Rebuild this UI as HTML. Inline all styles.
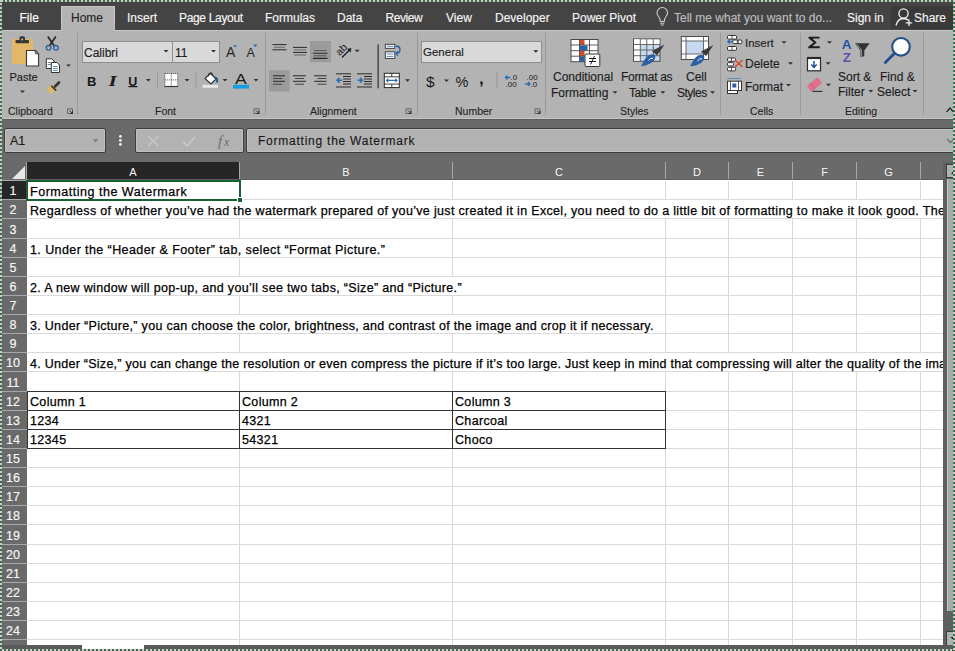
<!DOCTYPE html>
<html><head><meta charset="utf-8">
<style>
*{margin:0;padding:0;box-sizing:border-box}
html,body{width:955px;height:651px;overflow:hidden;background:#fff}
body{position:relative;font-family:"Liberation Sans",sans-serif;}
.a{position:absolute}
.t{position:absolute;white-space:pre;line-height:1}
.tab{color:#f4f4f4;font-size:12px;top:12px;-webkit-text-stroke-width:0.15px}
.grp{position:absolute;white-space:pre;line-height:1;color:#222;font-size:10.5px;top:105.8px;-webkit-text-stroke-width:0.1px}
.sep{position:absolute;top:33px;width:1px;height:82px;background:#9a9a9a}
.lbl{position:absolute;white-space:pre;line-height:1;color:#1e1e1e;font-size:12px;-webkit-text-stroke-width:0.15px}
.arr{position:absolute;width:0;height:0;border-left:3px solid transparent;border-right:3px solid transparent;border-top:3px solid #333}
.hl{left:27px;width:916px;height:1px;background:#d9d9d9}
.vl{top:181px;width:1px;height:465px;background:#d9d9d9}
.ch{position:absolute;top:162px;height:18px;color:#f8f8f8;font-size:11px;text-align:center;line-height:20px}
.rh{position:absolute;left:1px;width:24px;color:#f8f8f8;font-size:12.5px;text-align:center;line-height:11px;-webkit-text-stroke-width:0.15px}
.cell{position:absolute;color:#000;font-size:12.5px;white-space:pre;letter-spacing:0.33px;line-height:12px;-webkit-text-stroke-width:0.25px}
</style></head><body>

<!-- tab bar -->
<div class="a" style="left:0;top:0;width:955px;height:30px;background:#444"></div>
<div class="t tab" style="left:19.5px;color:#fff">File</div>
<div class="t tab" style="left:127px">Insert</div>
<div class="t tab" style="left:179px;letter-spacing:-0.33px">Page Layout</div>
<div class="t tab" style="left:265px">Formulas</div>
<div class="t tab" style="left:337px">Data</div>
<div class="t tab" style="left:385.5px;letter-spacing:-0.45px">Review</div>
<div class="t tab" style="left:446px">View</div>
<div class="t tab" style="left:495px">Developer</div>
<div class="t tab" style="left:572px">Power Pivot</div>
<div class="t tab" style="left:674px;color:#bdbdbd">Tell me what you want to do...</div>
<div class="t tab" style="left:847px">Sign in</div>
<div class="a" style="left:891px;top:6px;width:62px;height:23px;background:#3a3a3a"></div>
<div class="t tab" style="left:914px">Share</div>
<svg class="a" style="left:640px;top:0" width="315" height="30" viewBox="640 0 315 30">
<path d="M660.3 21.5 Q660.3 18.5 658.6 16.5 Q657 14.7 657 12.8 A5.3 5.3 0 0 1 667.6 12.8 Q667.6 14.7 666 16.5 Q664.3 18.5 664.3 21.5 Z" fill="none" stroke="#d0d0d0" stroke-width="1.1"/>
<path d="M660.3 23.3 H664.3 M660.8 25 H663.8" stroke="#d0d0d0" stroke-width="1.1"/>
<circle cx="903.5" cy="13.5" r="4.6" fill="none" stroke="#f0f0f0" stroke-width="1.3"/>
<path d="M896 25.5 Q897.5 18.8 903.5 18.5 Q906.5 18.5 908.5 20.3" fill="none" stroke="#f0f0f0" stroke-width="1.3"/>
<path d="M909 19.5 V26 M905.8 22.8 H912.2" stroke="#f0f0f0" stroke-width="1.3"/>
</svg>

<!-- ribbon body -->
<div class="a" style="left:0;top:30px;width:955px;height:89px;background:#b3b3b3;border-top:1px solid #c6c6c6"></div>
<div class="a" style="left:61px;top:6px;width:54px;height:25px;background:#b3b3b3;border:1px solid #c6c6c6;border-bottom:none"></div>
<div class="t tab" style="left:71px;color:#262626">Home</div>

<!-- separators -->
<div class="sep" style="left:77px"></div>
<div class="sep" style="left:265px"></div>
<div class="sep" style="left:417px"></div>
<div class="sep" style="left:545px"></div>
<div class="sep" style="left:720px"></div>
<div class="sep" style="left:800px"></div>
<div class="sep" style="left:923px"></div>
<!-- group labels -->
<div class="grp" style="left:8px">Clipboard</div>
<div class="grp" style="left:155px">Font</div>
<div class="grp" style="left:310px">Alignment</div>
<div class="grp" style="left:455px">Number</div>
<div class="grp" style="left:620px">Styles</div>
<div class="grp" style="left:750px">Cells</div>
<div class="grp" style="left:845px">Editing</div>
<!-- Clipboard -->
<div class="lbl" style="left:9.5px;top:71.5px;font-size:11px">Paste</div>
<!-- Font combos -->
<div class="a" style="left:82px;top:41px;width:91px;height:22px;background:#d9d9d9;border:1px solid #8e8e8e"></div>
<div class="a" style="left:172px;top:41px;width:48px;height:22px;background:#d9d9d9;border:1px solid #8e8e8e"></div>
<div class="lbl" style="left:84px;top:46.5px">Calibri</div>
<div class="lbl" style="left:175px;top:46.5px">11</div>
<!-- Number combo -->
<div class="a" style="left:421px;top:41px;width:121px;height:22px;background:#d9d9d9;border:1px solid #8e8e8e"></div>
<div class="lbl" style="left:423px;top:47px;font-size:11.5px">General</div>
<!-- Styles labels -->
<div class="lbl" style="left:553px;top:71px">Conditional</div>
<div class="lbl" style="left:551px;top:86.5px">Formatting</div>
<div class="lbl" style="left:621px;top:71px;letter-spacing:-0.3px">Format as</div>
<div class="lbl" style="left:629px;top:86.5px;letter-spacing:-0.4px">Table</div>
<div class="lbl" style="left:686px;top:71px">Cell</div>
<div class="lbl" style="left:677px;top:86.5px;letter-spacing:-0.5px">Styles</div>
<!-- Cells labels -->
<div class="lbl" style="left:745px;top:37.6px;font-size:11.5px">Insert</div>
<div class="lbl" style="left:745px;top:58.3px">Delete</div>
<div class="lbl" style="left:745px;top:80.6px">Format</div>
<!-- Editing labels -->
<div class="lbl" style="left:838px;top:70.8px">Sort &amp;</div>
<div class="lbl" style="left:838px;top:86px">Filter</div>
<div class="lbl" style="left:880px;top:70.8px">Find &amp;</div>
<div class="lbl" style="left:877px;top:86px">Select</div>
<!-- formula bar area -->
<div class="a" style="left:0;top:118px;width:955px;height:44px;background:#6a6a6a;border-top:1px solid #c6c6c6"></div><div class="a" style="left:0;top:119px;width:955px;height:1px;background:#5c5c5c"></div>
<div class="a" style="left:4px;top:128px;width:102px;height:25px;background:#b2b2b2;border:1px solid #3e3e3e;border-radius:2px;box-shadow:inset 0 0 0 1px #c0c0c0"></div>
<div class="lbl" style="left:10px;top:135px;font-size:12.5px;color:#1a1a1a">A1</div>
<div class="a" style="left:135px;top:128px;width:109px;height:25px;background:#b2b2b2;border:1px solid #3e3e3e;border-radius:2px;box-shadow:inset 0 0 0 1px #c0c0c0"></div>
<div class="a" style="left:246px;top:128px;width:720px;height:25px;background:#b2b2b2;border:1px solid #3e3e3e;border-radius:2px;box-shadow:inset 0 0 0 1px #c0c0c0"></div>
<div class="lbl" style="left:258px;top:135px;font-size:12px;letter-spacing:0.76px;color:#1a1a1a">Formatting the Watermark</div>

<svg class="a" style="left:0;top:119px" width="955" height="43" viewBox="0 119 955 43">
<path d="M92.8 139.2 H98.5 L95.65 142.2 Z" fill="#7a7a7a"/>
<circle cx="120.4" cy="136.4" r="1.3" fill="#fff"/>
<circle cx="120.4" cy="140.4" r="1.3" fill="#fff"/>
<circle cx="120.4" cy="144.4" r="1.3" fill="#fff"/>
<path d="M148 136 L158.5 146 M158.5 136 L148 146" stroke="#c8c8c8" stroke-width="1.3"/>
<path d="M183 141.5 L187.3 146 L195.3 136.5" stroke="#c8c8c8" stroke-width="1.6" fill="none"/>
<text x="218" y="145.5" font-family="Liberation Serif" font-style="italic" font-size="15" fill="#6e6e6e">f</text>
<text x="224" y="145.5" font-family="Liberation Serif" font-style="italic" font-size="12" fill="#6e6e6e">x</text>
<path d="M947 139 L950.5 142.5 L954 139" stroke="#707070" stroke-width="1.4" fill="none"/>
</svg>

<svg class="a" style="left:0;top:0" width="955" height="160" viewBox="0 0 955 160">
<!-- ===== Clipboard ===== -->
<!-- paste -->
<rect x="12" y="39" width="21" height="25" fill="#e3b768"/>
<rect x="15.5" y="40" width="13.5" height="3.2" rx="0.8" fill="#363636"/>
<rect x="19.5" y="36.3" width="5.5" height="4.5" rx="1.5" fill="#363636"/>
<circle cx="22.2" cy="39.4" r="1" fill="#c8c8c8"/>
<path d="M26.5 50.5 H35.3 L38.6 53.8 V66 H26.5 Z" fill="#fff" stroke="#363636" stroke-width="1.1" stroke-linejoin="round"/>
<path d="M35.3 50.5 V53.8 H38.6" fill="none" stroke="#363636" stroke-width="0.9"/>
<path d="M20 90.5 H25 L22.5 93 Z" fill="#333"/>
<!-- scissors -->
<path d="M47.8 36.5 L54.3 46 M55.8 36.5 L49.3 46" stroke="#262626" stroke-width="1.7" fill="none"/>
<circle cx="48.6" cy="47.8" r="2.3" fill="none" stroke="#2f62a5" stroke-width="1.4"/>
<circle cx="55.9" cy="47.8" r="2.3" fill="none" stroke="#2f62a5" stroke-width="1.4"/>
<!-- copy -->
<path d="M46.3 58.8 H51.8 L54 61 V68.5 H46.3 Z" fill="#fff" stroke="#333" stroke-width="1"/>
<path d="M47.8 62.5 H51.5 M47.8 64.5 H51.5" stroke="#3b6fae" stroke-width="0.8"/>
<path d="M51.3 62.5 H57 L59.5 65 V72.5 H51.3 Z" fill="#fff" stroke="#333" stroke-width="1"/>
<path d="M53 66.5 H57.8 M53 68.5 H57.8 M53 70.5 H57.8" stroke="#3b6fae" stroke-width="0.8"/>
<path d="M66 64.4 H71 L68.5 66.8 Z" fill="#333"/>
<!-- format painter -->
<path d="M52.5 84.5 L57.5 89.5 L51 93.7 L46.3 89 Z" fill="#e3b768"/>
<path d="M51.3 85.8 L56.2 90.6" stroke="#333" stroke-width="1.6"/>
<path d="M55 86.5 L59 82.5" stroke="#333" stroke-width="2.6" stroke-linecap="round"/>
<!-- launcher -->
<path d="M67.5 108.8 H72.5 V113.5 H67.5 Z" fill="none" stroke="#555" stroke-width="0.8"/>
<path d="M69.5 110.5 L72.5 113.5 M72.5 111 V113.5 H70" stroke="#333" stroke-width="1" fill="none"/>

<!-- ===== Font ===== -->
<path d="M163.5 50 H168.5 L166 52.5 Z" fill="#333"/>
<path d="M211 50 H216 L213.5 52.5 Z" fill="#333"/>
<text x="226" y="57" font-family="Liberation Sans" font-size="14" fill="#262626">A</text>
<path d="M233 46.8 L235 44.5 L237 46.8" fill="#2b6cb5"/>
<text x="246.5" y="57" font-family="Liberation Sans" font-size="12.5" fill="#262626">A</text>
<path d="M253 44.6 H257.5 L255.2 47 Z" fill="#2b6cb5"/>
<text x="87" y="85.6" font-family="Liberation Sans" font-weight="bold" font-size="13" fill="#1a1a1a">B</text>
<text x="108.5" y="85.6" font-family="Liberation Serif" font-style="italic" font-weight="bold" font-size="14" fill="#1a1a1a" textLength="8.3" lengthAdjust="spacingAndGlyphs">I</text>
<text x="128.2" y="85.6" font-family="Liberation Sans" font-weight="bold" font-size="12.5" fill="#1a1a1a">U</text>
<rect x="128.4" y="86" width="9" height="1.2" fill="#1a1a1a"/>
<path d="M145.8 79 H150.8 L148.3 81.5 Z" fill="#333"/>
<rect x="157" y="72.5" width="1" height="15.5" fill="#9a9a9a"/>
<rect x="164.8" y="73.5" width="13" height="12.8" fill="#fff"/>
<path d="M164.8 73.5 H177.8 V86.3 M164.8 73.5 V86.3 M171.3 73.5 V86.3 M164.8 79.9 H177.8" stroke="#3a3a3a" stroke-width="0.9" stroke-dasharray="1 1" fill="none"/>
<path d="M164.5 86.5 H178" stroke="#3a3a3a" stroke-width="1.2"/>

<path d="M184.5 79 H189.5 L187 81.5 Z" fill="#333"/>
<rect x="195.5" y="72.5" width="1" height="15.5" fill="#9a9a9a"/>
<path d="M205 78.5 L210.5 73.5 L216 79 L211 84 Z" fill="#fff" stroke="#333" stroke-width="1.1" stroke-linejoin="round"/>
<path d="M208.2 76.5 Q208 72.8 210.5 72.6 Q212.8 72.6 213 75.5" stroke="#333" stroke-width="1" fill="none"/>
<path d="M214.5 77 Q218.3 78 216.8 82.5" stroke="#1f4e9c" stroke-width="1.8" fill="none"/>
<rect x="202.5" y="84.8" width="15.5" height="3" fill="#e6e6e6"/>
<path d="M222.5 79 H227.5 L225 81.5 Z" fill="#333"/>
<text x="235" y="83.6" font-family="Liberation Sans" font-size="14.5" fill="#1a1a1a" textLength="11.7" lengthAdjust="spacingAndGlyphs">A</text>
<rect x="233" y="84.8" width="16" height="3.8" fill="#12a0e3"/>
<path d="M253.5 79 H258.5 L256 81.5 Z" fill="#333"/>
<path d="M254 108.8 H259 V113.5 H254 Z" fill="none" stroke="#555" stroke-width="0.8"/>
<path d="M256 110.5 L259 113.5 M259 111 V113.5 H256.5" stroke="#333" stroke-width="1" fill="none"/>

<!-- ===== Alignment ===== -->
<path d="M272.5 44.6 H286.5 M272.5 49.8 H286.5" stroke="#2a2a2a" stroke-width="1"/>
<path d="M274 47.2 H285" stroke="#666" stroke-width="1"/>
<path d="M293 47.4 H307 M293 52.4 H307" stroke="#2a2a2a" stroke-width="1"/>
<path d="M294 49.9 H306 M294 55 H306" stroke="#666" stroke-width="1"/>
<rect x="310" y="41" width="21" height="21.3" fill="#9b9b9b"/>
<path d="M313 53.2 H327.5 M313 58.4 H327.5" stroke="#2a2a2a" stroke-width="1.1"/>
<path d="M314 50.6 H326.5 M314 55.8 H326.5" stroke="#555" stroke-width="1"/>
<g transform="translate(341.5,49.5) rotate(-45)">
<text x="-6" y="3.5" font-family="Liberation Sans" font-size="10.5" fill="#1e1e1e" style="-webkit-text-stroke-width:0.2px">ab</text>
</g>
<path d="M342 57.5 L350.5 49" stroke="#1e1e1e" stroke-width="1.2"/>
<path d="M347 48.8 L351.3 48.2 L350.7 52.5 Z" fill="#1e1e1e"/>
<path d="M354.7 49.8 H359.7 L357.2 52.3 Z" fill="#333"/>
<rect x="377.5" y="44.3" width="1.3" height="44" fill="#3a3a3a"/>
<rect x="385.3" y="44.3" width="9.5" height="4" fill="#fff" stroke="#333" stroke-width="0.9"/>
<rect x="385.3" y="51.8" width="9.5" height="6.6" fill="#fff" stroke="#333" stroke-width="0.9"/>
<path d="M386.8 46.3 H393.3 M386.8 54 H393.3 M386.8 56.4 H393.3" stroke="#2b6cb5" stroke-width="0.8"/>
<path d="M395.5 46.3 H397 Q400 46.5 400 49.5 Q400 53 396.5 53.5" stroke="#2b5fa5" stroke-width="1.4" fill="none"/>
<path d="M398 51.3 L395.5 53.5 L398 55.7" stroke="#2b6cb5" stroke-width="1.2" fill="none"/>
<rect x="269" y="70.2" width="20.6" height="21.2" fill="#9b9b9b"/>
<path d="M273 75.8 H285 M273 81.3 H285" stroke="#2a2a2a" stroke-width="1"/>
<path d="M273 78.5 H282 M273 84.2 H282" stroke="#444" stroke-width="1"/>
<path d="M292.8 75.8 H306 M292.8 81.3 H306" stroke="#2a2a2a" stroke-width="1"/>
<path d="M295 78.5 H304 M295 84.2 H304" stroke="#444" stroke-width="1"/>
<path d="M314 75.8 H326.5 M314 81.3 H326.5" stroke="#2a2a2a" stroke-width="1"/>
<path d="M317.5 78.5 H326.5 M317.5 84.2 H326.5" stroke="#444" stroke-width="1"/>
<path d="M336 73.8 H351 M336 87 H351 M343 76.5 H351 M343 79 H351 M343 81.5 H351 M343 84 H351" stroke="#2a2a2a" stroke-width="1"/>
<path d="M342 80.3 H337 M339.5 77.8 L337 80.3 L339.5 82.8" stroke="#2b6cb5" stroke-width="1.5" fill="none"/>
<path d="M357 73.8 H372 M357 87 H372 M364 76.5 H372 M364 79 H372 M364 81.5 H372 M364 84 H372" stroke="#2a2a2a" stroke-width="1"/>
<path d="M357.5 80.3 H362.5 M360 77.8 L362.5 80.3 L360 82.8" stroke="#2b6cb5" stroke-width="1.5" fill="none"/>
<rect x="384.3" y="73.3" width="15" height="14.3" fill="#fff" stroke="#2a2a2a" stroke-width="1"/>
<path d="M384.3 76.8 H399.3 M384.3 84.1 H399.3 M391.8 73.3 V76.8 M391.8 84.1 V87.6" stroke="#2a2a2a" stroke-width="0.9"/>
<path d="M386.5 80.4 H397 M388.3 78.7 L386.5 80.4 L388.3 82.1 M395.2 78.7 L397 80.4 L395.2 82.1" stroke="#2b6cb5" stroke-width="1.1" fill="none"/>
<path d="M405 79.2 H410 L407.5 81.7 Z" fill="#333"/>
<path d="M406 108.8 H411 V113.5 H406 Z" fill="none" stroke="#555" stroke-width="0.8"/>
<path d="M408 110.5 L411 113.5 M411 111 V113.5 H408.5" stroke="#333" stroke-width="1" fill="none"/>

<!-- ===== Number ===== -->
<path d="M533.3 50.2 H538.3 L535.8 52.7 Z" fill="#262626"/>
<text x="426" y="86.5" font-family="Liberation Sans" font-size="15.5" fill="#1a1a1a">$</text>
<path d="M444 79.5 H449 L446.5 82 Z" fill="#333"/>
<text x="455.5" y="86.5" font-family="Liberation Sans" font-size="14.5" fill="#1a1a1a">%</text>
<text x="479" y="83.5" font-family="Liberation Sans" font-weight="bold" font-size="17" fill="#1a1a1a">,</text>
<rect x="496.3" y="72.7" width="1.2" height="15.6" fill="#9a9a9a"/>
<path d="M510.5 77.5 H505.5 M507.5 75.5 L505.5 77.5 L507.5 79.5" stroke="#2b6cb5" stroke-width="1.4" fill="none"/>
<text x="510.5" y="80" font-family="Liberation Sans" font-size="8" fill="#1a1a1a">.0</text>
<text x="505.5" y="87" font-family="Liberation Sans" font-size="8" fill="#1a1a1a">.00</text>
<text x="526.5" y="80" font-family="Liberation Sans" font-size="8" fill="#1a1a1a">.00</text>
<path d="M525 84 H530 M528 82 L530 84 L528 86" stroke="#2b6cb5" stroke-width="1.4" fill="none"/>
<text x="530.5" y="87" font-family="Liberation Sans" font-size="8" fill="#1a1a1a">.0</text>
<path d="M535 108.8 H540 V113.5 H535 Z" fill="none" stroke="#555" stroke-width="0.8"/>
<path d="M537 110.5 L540 113.5 M540 111 V113.5 H537.5" stroke="#333" stroke-width="1" fill="none"/>

<!-- ===== Styles ===== -->
<rect x="571" y="39.5" width="27" height="22.2" fill="#fff" stroke="#4a4a4a" stroke-width="1"/>
<rect x="579.5" y="40" width="5" height="5" fill="#d24a26"/>
<rect x="579.5" y="45.5" width="8" height="5" fill="#2b5fa5"/>
<rect x="579.5" y="51" width="5" height="5" fill="#d24a26"/>
<rect x="579.5" y="56.5" width="5" height="5" fill="#2b5fa5"/>
<path d="M579.5 39.5 V61.7 M589.5 39.5 V61.7 M571 45 H598 M571 50.7 H598 M571 56.2 H598" stroke="#4a4a4a" stroke-width="0.9"/>
<rect x="585" y="54" width="14.8" height="12.5" rx="1" fill="#fff" stroke="#333" stroke-width="1"/>
<path d="M589 58.5 H596 M589 61.5 H596 M594.5 56 L590.5 64.5" stroke="#1a1a1a" stroke-width="1"/>
<rect x="633.5" y="39" width="26.5" height="22.3" fill="#c7d9ee" stroke="#4a4a4a" stroke-width="1"/>
<rect x="634" y="39.5" width="25.5" height="5" fill="#fff"/>
<rect x="634" y="39.5" width="6" height="21.3" fill="#fff"/>
<path d="M640.3 39 V61.3 M646.8 39 V61.3 M653.3 39 V61.3 M633.5 44.5 H660 M633.5 50 H660 M633.5 55.7 H660" stroke="#5a5a5a" stroke-width="0.9"/>
<path d="M664.5 44.5 L657 55.5 L652 51 Z" fill="#3a3a3a"/>
<path d="M654.8 54.8 Q650 53 646 57.5 Q643 62 641 66.3 Q648 65.5 652.5 62 Q656.5 58.5 654.8 54.8 Z" fill="#2b5fa5"/>
<path d="M648.5 60.5 Q650.5 57.5 653 58.3" stroke="#fff" stroke-width="1" fill="none"/>
<rect x="681.3" y="36.5" width="27.2" height="23" fill="#fff" stroke="#4a4a4a" stroke-width="1"/>
<rect x="686" y="41" width="17.5" height="13" fill="#c7d9ee"/>
<path d="M686 36.5 V59.5 M703.5 36.5 V59.5 M681.3 41 H708.5 M681.3 54 H708.5" stroke="#5a5a5a" stroke-width="0.9"/>
<path d="M713.5 45 L706 56 L701 51.5 Z" fill="#3a3a3a"/>
<path d="M703.8 55.3 Q699 53.5 695 58 Q692 62.5 690 66.3 Q697 66 701.5 62.5 Q705.5 59 703.8 55.3 Z" fill="#2b5fa5"/>
<path d="M697.5 61 Q699.5 58 702 58.8" stroke="#fff" stroke-width="1" fill="none"/>
<path d="M612.5 91.3 H617.5 L615 93.8 Z" fill="#333"/>
<path d="M660.3 91.3 H665.3 L662.8 93.8 Z" fill="#333"/>
<path d="M710 91.3 H715 L712.5 93.8 Z" fill="#333"/>

<!-- ===== Cells ===== -->
<g fill="#fff" stroke="#333" stroke-width="1">
<rect x="727.5" y="35.5" width="9" height="3.6" rx="1"/>
<rect x="732.8" y="40" width="9" height="3.6" rx="1"/>
<rect x="727.5" y="46.5" width="9" height="3.8" rx="1"/>
<rect x="727.5" y="58" width="8" height="3.3" rx="1"/>
<rect x="727.5" y="62.6" width="6" height="3.3" rx="1"/>
<rect x="727.5" y="67.3" width="8" height="3.6" rx="1"/>
<rect x="727.5" y="81.2" width="14" height="9.3"/>
<rect x="727.5" y="90.5" width="10" height="3"/>
</g>
<path d="M732 35.5 V39 M732 46.5 V50.3 M737.3 40 V43.6 M731.5 67.3 V71 M731.5 58 V61.3 M738.3 40 V43.6" stroke="#333" stroke-width="0.8"/>
<path d="M732 41.8 H728 M729.8 40 L727.8 41.8 L729.8 43.6" stroke="#2b6cb5" stroke-width="1.4" fill="none"/>
<path d="M735 60 L742.5 67 M742.5 60 L735 67" stroke="#d24a26" stroke-width="1.5"/>
<path d="M727.5 78.5 H740.5" stroke="#2b6cb5" stroke-width="1.2" stroke-dasharray="1.2 0.8"/>
<rect x="732.3" y="83.5" width="4" height="4" fill="#2b5fa5"/>
<path d="M730.5 81.2 V90.5 M738.5 81.2 V90.5" stroke="#333" stroke-width="0.8"/>
<path d="M781.5 41.2 H786.5 L784 43.7 Z" fill="#333"/>
<path d="M788 62.2 H793 L790.5 64.7 Z" fill="#333"/>
<path d="M786 84 H791 L788.5 86.5 Z" fill="#333"/>

<!-- ===== Editing ===== -->
<path d="M808.5 36.8 H819.5 V38.6 H812.3 L816.6 42.4 L812.3 46.3 H819.8 V48.3 H808.3 V46.8 L813.8 42.4 L808.5 38.2 Z" fill="#1a1a1a"/>
<path d="M827 41.2 H832 L829.5 43.7 Z" fill="#333"/>
<rect x="807.5" y="57.5" width="13" height="13.3" fill="#fff" stroke="#2a2a2a" stroke-width="1.2"/>
<rect x="807.5" y="57.5" width="13" height="1.6" fill="#2a2a2a"/>
<path d="M814 61 V67.3 M811.3 64.5 L814 67.5 L816.7 64.5" stroke="#1f4e9c" stroke-width="1.5" fill="none"/>
<path d="M825.6 62.3 H830.6 L828.1 64.8 Z" fill="#333"/>
<g transform="translate(814.5,84.5) rotate(-40)">
<rect x="-7" y="-3.7" width="14" height="7.4" rx="1" fill="#e0708c"/>
<path d="M-2.5 -3.7 V3.7" stroke="#c85070" stroke-width="0.8"/>
</g>
<rect x="812.4" y="90.8" width="10" height="1.1" fill="#2a2a2a"/>
<path d="M826 83.8 H831 L828.5 86.3 Z" fill="#333"/>
<text x="841.8" y="48.6" font-family="Liberation Sans" font-weight="bold" font-size="13.5" fill="#1d55a5">A</text>
<text x="842.8" y="62.3" font-family="Liberation Sans" font-weight="bold" font-size="13.5" fill="#5d4eae">Z</text>
<path d="M855 43.3 H869.6 L864.3 50.5 V56.5 L860.3 56.5 V50.5 Z" fill="#333"/><path d="M856.8 44.2 L861.3 50 V56" stroke="#ddd" stroke-width="0.7" fill="none"/>
<circle cx="901" cy="46.8" r="8.8" fill="#fff" stroke="#1f4e8c" stroke-width="2.1"/>
<path d="M894.3 53.6 L885.3 62.5" stroke="#1f4e8c" stroke-width="2.8" stroke-linecap="round"/>
<path d="M868.3 90 H873.3 L870.8 92.5 Z" fill="#333"/>
<path d="M912.5 90 H917.5 L915 92.5 Z" fill="#333"/>
<path d="M946.5 112 L950 108 L953.5 112" stroke="#262626" stroke-width="1.3" fill="none"/>
</svg>

<div class="a" style="left:27px;top:181px;width:916px;height:465px;background:#fff"></div>
<div class="a hl" style="top:199px"></div>
<div class="a hl" style="top:218px"></div>
<div class="a hl" style="top:238px"></div>
<div class="a hl" style="top:257px"></div>
<div class="a hl" style="top:276px"></div>
<div class="a hl" style="top:295px"></div>
<div class="a hl" style="top:314px"></div>
<div class="a hl" style="top:333px"></div>
<div class="a hl" style="top:352px"></div>
<div class="a hl" style="top:371px"></div>
<div class="a hl" style="top:391px"></div>
<div class="a hl" style="top:410px"></div>
<div class="a hl" style="top:429px"></div>
<div class="a hl" style="top:448px"></div>
<div class="a hl" style="top:467px"></div>
<div class="a hl" style="top:486px"></div>
<div class="a hl" style="top:505px"></div>
<div class="a hl" style="top:524px"></div>
<div class="a hl" style="top:544px"></div>
<div class="a hl" style="top:563px"></div>
<div class="a hl" style="top:582px"></div>
<div class="a hl" style="top:601px"></div>
<div class="a hl" style="top:620px"></div>
<div class="a hl" style="top:639px"></div>
<div class="a vl" style="left:239px"></div>
<div class="a vl" style="left:452px"></div>
<div class="a vl" style="left:665px"></div>
<div class="a vl" style="left:728px"></div>
<div class="a vl" style="left:792px"></div>
<div class="a vl" style="left:856px"></div>
<div class="a vl" style="left:920px"></div>
<div class="a" style="left:2px;top:162px;width:941px;height:18px;background:#6a6a6a"></div>
<div class="a" style="left:27px;top:162px;width:212px;height:18px;background:#262626"></div>
<div class="ch" style="left:27px;width:212px">A</div>
<div class="a" style="left:239px;top:162px;width:1px;height:18px;background:#a8a8a8"></div>
<div class="ch" style="left:240px;width:212px">B</div>
<div class="a" style="left:452px;top:162px;width:1px;height:18px;background:#a8a8a8"></div>
<div class="ch" style="left:453px;width:212px">C</div>
<div class="a" style="left:665px;top:162px;width:1px;height:18px;background:#a8a8a8"></div>
<div class="ch" style="left:666px;width:62px">D</div>
<div class="a" style="left:728px;top:162px;width:1px;height:18px;background:#a8a8a8"></div>
<div class="ch" style="left:729px;width:63px">E</div>
<div class="a" style="left:792px;top:162px;width:1px;height:18px;background:#a8a8a8"></div>
<div class="ch" style="left:793px;width:63px">F</div>
<div class="a" style="left:856px;top:162px;width:1px;height:18px;background:#a8a8a8"></div>
<div class="ch" style="left:857px;width:63px">G</div>
<div class="a" style="left:920px;top:162px;width:1px;height:18px;background:#a8a8a8"></div>
<div class="ch" style="left:921px;width:63px">H</div>
<div class="a" style="left:2px;top:180px;width:25px;height:1px;background:#a8a8a8"></div>
<div class="a" style="left:27px;top:179px;width:916px;height:1px;background:#5e5e5e"></div>
<svg class="a" style="left:2px;top:162px" width="25" height="19"><polygon points="23,4 23,17 10,17" fill="#e8e8e8"/></svg>
<div class="a" style="left:26px;top:162px;width:1px;height:19px;background:#a8a8a8"></div>
<div class="a" style="left:2px;top:181px;width:25px;height:18px;background:#262626"></div>
<div class="a" style="left:2px;top:199px;width:25px;height:1px;background:#a8a8a8"></div>
<div class="rh" style="top:186.3px">1</div>
<div class="a" style="left:2px;top:200px;width:25px;height:18px;background:#6a6a6a"></div>
<div class="a" style="left:2px;top:218px;width:25px;height:1px;background:#a8a8a8"></div>
<div class="rh" style="top:205.3px">2</div>
<div class="a" style="left:2px;top:219px;width:25px;height:19px;background:#6a6a6a"></div>
<div class="a" style="left:2px;top:238px;width:25px;height:1px;background:#a8a8a8"></div>
<div class="rh" style="top:225.3px">3</div>
<div class="a" style="left:2px;top:239px;width:25px;height:18px;background:#6a6a6a"></div>
<div class="a" style="left:2px;top:257px;width:25px;height:1px;background:#a8a8a8"></div>
<div class="rh" style="top:244.3px">4</div>
<div class="a" style="left:2px;top:258px;width:25px;height:18px;background:#6a6a6a"></div>
<div class="a" style="left:2px;top:276px;width:25px;height:1px;background:#a8a8a8"></div>
<div class="rh" style="top:263.3px">5</div>
<div class="a" style="left:2px;top:277px;width:25px;height:18px;background:#6a6a6a"></div>
<div class="a" style="left:2px;top:295px;width:25px;height:1px;background:#a8a8a8"></div>
<div class="rh" style="top:282.3px">6</div>
<div class="a" style="left:2px;top:296px;width:25px;height:18px;background:#6a6a6a"></div>
<div class="a" style="left:2px;top:314px;width:25px;height:1px;background:#a8a8a8"></div>
<div class="rh" style="top:301.3px">7</div>
<div class="a" style="left:2px;top:315px;width:25px;height:18px;background:#6a6a6a"></div>
<div class="a" style="left:2px;top:333px;width:25px;height:1px;background:#a8a8a8"></div>
<div class="rh" style="top:320.3px">8</div>
<div class="a" style="left:2px;top:334px;width:25px;height:18px;background:#6a6a6a"></div>
<div class="a" style="left:2px;top:352px;width:25px;height:1px;background:#a8a8a8"></div>
<div class="rh" style="top:339.3px">9</div>
<div class="a" style="left:2px;top:353px;width:25px;height:18px;background:#6a6a6a"></div>
<div class="a" style="left:2px;top:371px;width:25px;height:1px;background:#a8a8a8"></div>
<div class="rh" style="top:358.3px">10</div>
<div class="a" style="left:2px;top:372px;width:25px;height:19px;background:#6a6a6a"></div>
<div class="a" style="left:2px;top:391px;width:25px;height:1px;background:#a8a8a8"></div>
<div class="rh" style="top:378.3px">11</div>
<div class="a" style="left:2px;top:392px;width:25px;height:18px;background:#6a6a6a"></div>
<div class="a" style="left:2px;top:410px;width:25px;height:1px;background:#a8a8a8"></div>
<div class="rh" style="top:397.3px">12</div>
<div class="a" style="left:2px;top:411px;width:25px;height:18px;background:#6a6a6a"></div>
<div class="a" style="left:2px;top:429px;width:25px;height:1px;background:#a8a8a8"></div>
<div class="rh" style="top:416.3px">13</div>
<div class="a" style="left:2px;top:430px;width:25px;height:18px;background:#6a6a6a"></div>
<div class="a" style="left:2px;top:448px;width:25px;height:1px;background:#a8a8a8"></div>
<div class="rh" style="top:435.3px">14</div>
<div class="a" style="left:2px;top:449px;width:25px;height:18px;background:#6a6a6a"></div>
<div class="a" style="left:2px;top:467px;width:25px;height:1px;background:#a8a8a8"></div>
<div class="rh" style="top:454.3px">15</div>
<div class="a" style="left:2px;top:468px;width:25px;height:18px;background:#6a6a6a"></div>
<div class="a" style="left:2px;top:486px;width:25px;height:1px;background:#a8a8a8"></div>
<div class="rh" style="top:473.3px">16</div>
<div class="a" style="left:2px;top:487px;width:25px;height:18px;background:#6a6a6a"></div>
<div class="a" style="left:2px;top:505px;width:25px;height:1px;background:#a8a8a8"></div>
<div class="rh" style="top:492.3px">17</div>
<div class="a" style="left:2px;top:506px;width:25px;height:18px;background:#6a6a6a"></div>
<div class="a" style="left:2px;top:524px;width:25px;height:1px;background:#a8a8a8"></div>
<div class="rh" style="top:511.3px">18</div>
<div class="a" style="left:2px;top:525px;width:25px;height:19px;background:#6a6a6a"></div>
<div class="a" style="left:2px;top:544px;width:25px;height:1px;background:#a8a8a8"></div>
<div class="rh" style="top:531.3px">19</div>
<div class="a" style="left:2px;top:545px;width:25px;height:18px;background:#6a6a6a"></div>
<div class="a" style="left:2px;top:563px;width:25px;height:1px;background:#a8a8a8"></div>
<div class="rh" style="top:550.3px">20</div>
<div class="a" style="left:2px;top:564px;width:25px;height:18px;background:#6a6a6a"></div>
<div class="a" style="left:2px;top:582px;width:25px;height:1px;background:#a8a8a8"></div>
<div class="rh" style="top:569.3px">21</div>
<div class="a" style="left:2px;top:583px;width:25px;height:18px;background:#6a6a6a"></div>
<div class="a" style="left:2px;top:601px;width:25px;height:1px;background:#a8a8a8"></div>
<div class="rh" style="top:588.3px">22</div>
<div class="a" style="left:2px;top:602px;width:25px;height:18px;background:#6a6a6a"></div>
<div class="a" style="left:2px;top:620px;width:25px;height:1px;background:#a8a8a8"></div>
<div class="rh" style="top:607.3px">23</div>
<div class="a" style="left:2px;top:621px;width:25px;height:18px;background:#6a6a6a"></div>
<div class="a" style="left:2px;top:639px;width:25px;height:1px;background:#a8a8a8"></div>
<div class="rh" style="top:626.3px">24</div>
<div class="a" style="left:2px;top:640px;width:25px;height:5px;background:#6a6a6a"></div>
<div class="rh" style="top:645.3px">25</div>
<div class="a" style="left:28px;top:200px;width:915px;height:18px;background:#fff"></div>
<div class="a" style="left:28px;top:239px;width:423px;height:18px;background:#fff"></div>
<div class="a" style="left:28px;top:277px;width:636px;height:18px;background:#fff"></div>
<div class="a" style="left:28px;top:315px;width:636px;height:18px;background:#fff"></div>
<div class="a" style="left:28px;top:353px;width:915px;height:18px;background:#fff"></div>
<div class="a" style="left:27px;top:181px;width:916px;height:465px;overflow:hidden">
<div class="cell" style="left:3px;top:4.7px;letter-spacing:0.52px">Formatting the Watermark</div>
<div class="cell" style="left:3px;top:23.7px">Regardless of whether you’ve had the watermark prepared of you’ve just created it in Excel, you need to do a little bit of formatting to make it look good. The</div>
<div class="cell" style="left:3px;top:62.7px;letter-spacing:0.41px">1. Under the “Header &amp; Footer” tab, select “Format Picture.”</div>
<div class="cell" style="left:3px;top:100.7px">2. A new window will pop-up, and you’ll see two tabs, “Size” and “Picture.”</div>
<div class="cell" style="left:3px;top:138.7px;letter-spacing:0.3px">3. Under “Picture,” you can choose the color, brightness, and contrast of the image and crop it if necessary.</div>
<div class="cell" style="left:3px;top:176.7px;letter-spacing:0.265px">4. Under “Size,” you can change the resolution or even compress the picture if it’s too large. Just keep in mind that compressing will alter the quality of the image.</div>
<div class="cell" style="left:3px;top:214.7px">Column 1</div>
<div class="cell" style="left:215px;top:214.7px">Column 2</div>
<div class="cell" style="left:428px;top:214.7px">Column 3</div>
<div class="cell" style="left:3px;top:233.7px">1234</div>
<div class="cell" style="left:215px;top:233.7px">4321</div>
<div class="cell" style="left:428px;top:233.7px">Charcoal</div>
<div class="cell" style="left:3px;top:252.7px">12345</div>
<div class="cell" style="left:215px;top:252.7px">54321</div>
<div class="cell" style="left:428px;top:252.7px">Choco</div>
</div>
<div class="a" style="left:27px;top:391px;width:639px;height:58px;border:1px solid #333"></div>
<div class="a" style="left:27px;top:410px;width:639px;height:1px;background:#333"></div>
<div class="a" style="left:27px;top:429px;width:639px;height:1px;background:#333"></div>
<div class="a" style="left:239px;top:391px;width:1px;height:58px;background:#333"></div>
<div class="a" style="left:452px;top:391px;width:1px;height:58px;background:#333"></div>
<div class="a" style="left:26px;top:180px;width:215px;height:21px;border:2px solid #176134"></div>
<div class="a" style="left:237px;top:197px;width:6px;height:6px;background:#176134;border:1px solid #fff"></div>
<div class="a" style="left:943px;top:162px;width:12px;height:489px;background:#5f5f5f"></div>
<div class="a" style="left:946px;top:164px;width:9px;height:14px;background:#b0b0b0;border:1px solid #3c3c3c;border-right:none"></div>
<svg class="a" style="left:946px;top:164px" width="9" height="14"><path d="M5 10 L8 6.5 L8 10 Z" fill="#111"/></svg>
<div class="a" style="left:947px;top:179px;width:8px;height:432px;background:#a8a8a8;border-left:1px solid #c8c8c8"></div>
<div class="a" style="left:946px;top:631px;width:9px;height:15px;background:#b0b0b0;border-top:1px solid #3c3c3c;border-left:1px solid #3c3c3c"></div>
<svg class="a" style="left:946px;top:631px" width="9" height="15"><path d="M4.5 6 L8 6 L8 9.5 Z" fill="#111"/></svg>
<div class="a" style="left:0;top:645px;width:955px;height:6px;background:#5a5a5a"></div>
<div class="a" style="left:82px;top:645px;width:62px;height:4px;background:#fff"></div>
<!-- dashed border -->
<div class="a" style="left:0;top:0;width:955px;height:2px;background:repeating-linear-gradient(to right,#cdcdcd 0 2px,#3d7046 2px 4px);background-position:1px 0"></div>
<div class="a" style="left:0;top:649px;width:955px;height:2px;background:repeating-linear-gradient(to right,#cdcdcd 0 2px,#3d7046 2px 4px);background-position:2px 0"></div>
<div class="a" style="left:0;top:0;width:2px;height:651px;background:repeating-linear-gradient(to bottom,#cdcdcd 0 2px,#3d7046 2px 4px);background-position:0 3px"></div>
<div class="a" style="left:953px;top:0;width:2px;height:651px;background:repeating-linear-gradient(to bottom,#cdcdcd 0 2px,#3d7046 2px 4px);background-position:0 0"></div>
</body></html>
